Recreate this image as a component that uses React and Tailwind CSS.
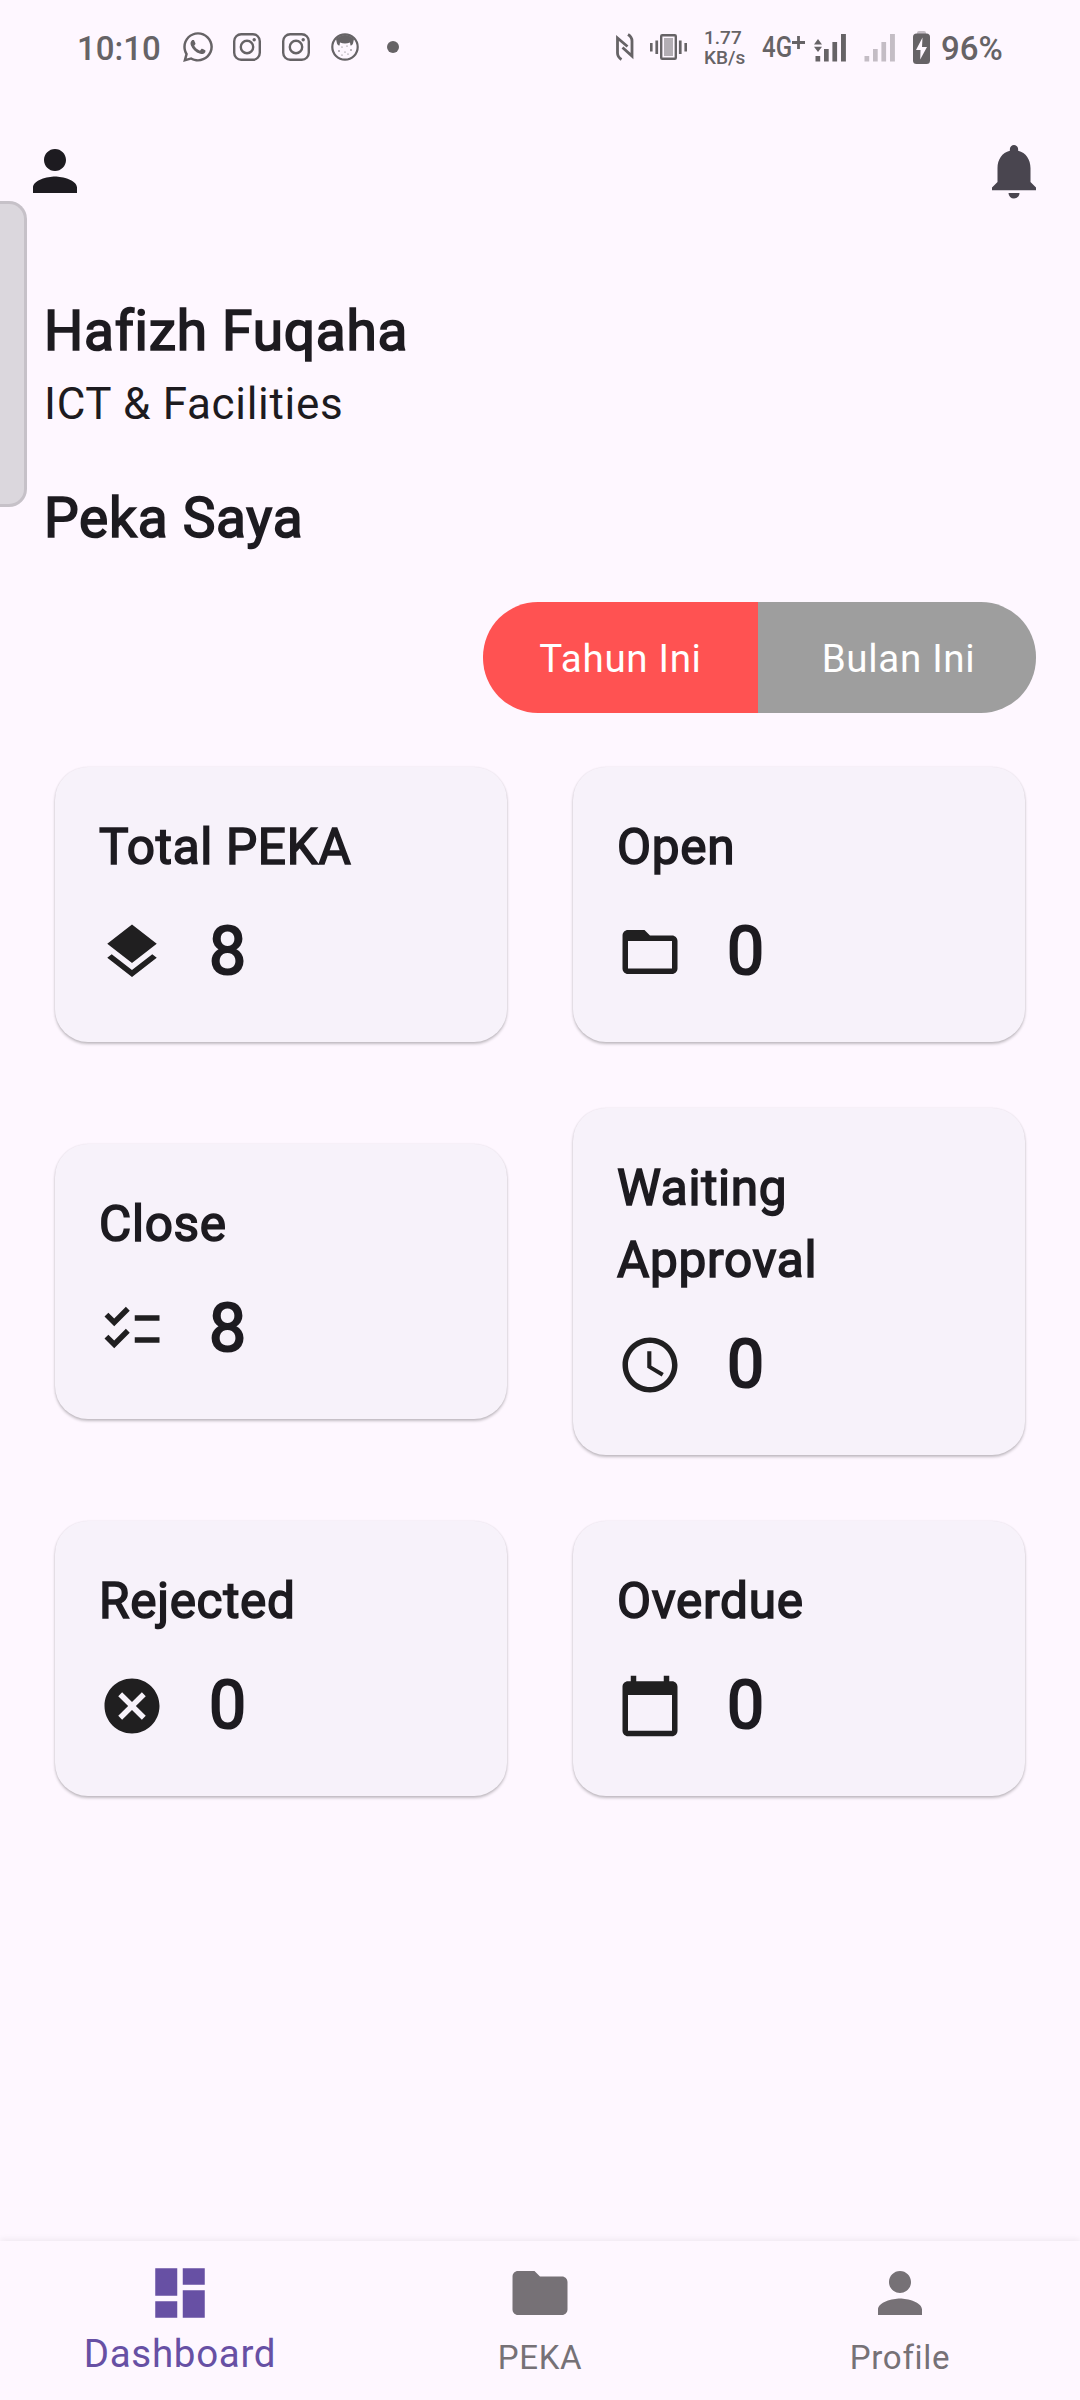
import {
  MdPerson, MdNotifications, MdLayers, MdFolderOpen, MdChecklist,
  MdAccessTime, MdCancel, MdCalendarToday, MdDashboard, MdFolder,
} from "react-icons/md";
import { FaWhatsapp } from "react-icons/fa";

function InstagramIcon({ className }) {
  return (
    <svg viewBox="0 0 28 28" className={className} fill="none" stroke="currentColor" strokeWidth="2.4">
      <rect x="1.2" y="1.2" width="25.6" height="25.6" rx="7" />
      <circle cx="14" cy="14" r="6.2" />
      <circle cx="21.2" cy="6.8" r="1.7" fill="currentColor" stroke="none" />
    </svg>
  );
}

function FaceIcon({ className }) {
  return (
    <svg viewBox="0 0 28 28" className={className}>
      <circle cx="14" cy="14" r="12.7" fill="none" stroke="currentColor" strokeWidth="2.2" />
      <path d="M5 6 Q14 -2 23 6 L22 10.5 Q21 13 19.5 12.5 L19 9.5 Q14 11.500 9 9.5 L8.5 12.5 Q7 13 6 10.5 Z" fill="currentColor" />
      <g fill="currentColor">
        <circle cx="8" cy="18" r=".8" /><circle cx="11" cy="14" r=".6" /><circle cx="16" cy="13" r=".6" />
        <circle cx="20" cy="17" r=".8" /><circle cx="14" cy="19" r=".6" /><circle cx="17" cy="21" r=".6" /><circle cx="11" cy="22" r=".6" />
      </g>
    </svg>
  );
}

function SignalBars({ className, arrows }) {
  return (
    <svg viewBox="0 0 32 30" className={className} fill="currentColor">
      <rect x="1.5" y="24" width="4.7" height="5.5" />
      <rect x="10" y="17" width="4.7" height="12.5" />
      <rect x="18.4" y="10" width="4.7" height="19.5" />
      <rect x="27" y="2" width="4.9" height="27.5" />
      {arrows && <path d="M4 7 8 12.5H0ZM4 20 0 14.700H8Z" />}
    </svg>
  );
}

function StatusBar() {
  return (
    <div className="flex h-[94px] items-center text-[#666366]">
      <div className="ml-[77px] w-[106px] pt-[3px] text-[33px] font-medium leading-none">10:10</div>
      <FaWhatsapp className="-ml-[2px] h-[34px] w-[34px]" />
      <InstagramIcon className="ml-[18px] h-[28px] w-[28px]" />
      <InstagramIcon className="ml-[21px] h-[28px] w-[28px]" />
      <FaceIcon className="ml-[21px] h-[28px] w-[28px]" />
      <div className="ml-[28px] h-[12px] w-[12px] rounded-full bg-current" />
      <svg viewBox="0 0 18 28" className="ml-[217px] h-[28px] w-[18px]" fill="none" stroke="currentColor" strokeWidth="2.8">
        <path d="M5.5 26.5 Q1.5 24 1.5 20 V5 L11.500 13.500" />
        <path d="M12 1.500 Q16 4 16 8 V23 L6.500 14.500" />
      </svg>
      <svg viewBox="0 0 37 26" className="ml-[16px] h-[26px] w-[37px]" fill="currentColor">
        <rect x="0" y="9" width="2.6" height="8.5" /><rect x="5.4" y="6.5" width="2.7" height="13.5" />
        <rect x="28.9" y="6.5" width="2.7" height="13.5" /><rect x="34.4" y="9" width="2.6" height="8.5" />
        <rect x="11.2" y="1.2" width="14.6" height="23.6" rx="1" fill="none" stroke="currentColor" strokeWidth="2.4" />
        <rect x="14" y="4" width="9" height="18" fill="#b3aeb4" />
      </svg>
      <div className="ml-[17px] w-[58px] pt-px text-[19px] font-medium leading-[20px]">
        <div>1.77</div>
        <div>KB/s</div>
      </div>
      <div className="w-[30px] text-[29px] font-medium leading-none"><span className="inline-block origin-left scale-x-[0.83]">4G</span></div>
      <svg viewBox="0 0 13 13" className="mb-[10px] h-[13px] w-[13px]" stroke="currentColor" strokeWidth="2.8"><path d="M6.500 0V13M0 6.500H13" /></svg>
      <SignalBars arrows className="ml-[9px] h-[30px] w-[32px]" />
      <SignalBars className="ml-[17px] h-[30px] w-[32px] text-[#c4bdc5]" />
      <svg viewBox="0 0 17 33" className="ml-[18px] h-[33px] w-[17px]">
        <rect x="4" y="0" width="9" height="5" rx="2" fill="#c4bdc5" />
        <rect x="0" y="2.5" width="17" height="30.5" rx="3.5" fill="currentColor" />
        <path d="M9.500 6.500 3 19H7.500L7.200 28.500 14 16H9Z" fill="#fef7ff" />
      </svg>
      <div className="ml-[11px] pt-[3px] text-[33px] font-medium leading-none">96%</div>
    </div>
  );
}

function StatCard({ title, icon: Icon, value }) {
  return (
    <div className="rounded-[33px] bg-[#f7f2fa] px-[44px] pt-[44px] shadow-[0_2px_3px_rgba(0,0,0,0.24),0_0_2px_rgba(0,0,0,0.08)]">
      <div className="w-[300px] text-[49.5px] leading-[72px] tracking-[0.69px] [-webkit-text-stroke:1.6px_#1d1b20]">{title}</div>
      <div className="mt-[22px] flex h-[137px] items-start gap-[44px]">
        <Icon className="mt-[14px] h-[66px] w-[66px] shrink-0 text-[#201f20]" />
        <div className="text-[66px] leading-[93px] [-webkit-text-stroke:2.1px_#1d1b20]">{value}</div>
      </div>
    </div>
  );
}

function NavItem({ icon: Icon, label, active }) {
  return (
    <div className={active ? "flex w-[360px] flex-col items-center text-[#6750a4]" : "flex w-[360px] flex-col items-center text-[#767176]"}>
      <Icon className="mt-[19px] h-[66px] w-[66px]" />
      <div className={active ? "mt-[6px] text-[38.5px] leading-[44px] tracking-[0.69px]" : "mt-[13px] text-[33px] leading-[38px] tracking-[0.69px]"}>{label}</div>
    </div>
  );
}

export default function App() {
  return (
    <div className="relative flex h-[2400px] w-[1080px] flex-col overflow-hidden bg-[#fef7ff] font-['Roboto',sans-serif] text-[#1d1b20]">
      <StatusBar />
      <div className="mt-[44px] flex justify-between pl-[22px] pr-[33px]">
        <MdPerson className="h-[66px] w-[66px]" />
        <MdNotifications className="h-[66px] w-[66px] text-[#49454f]" />
      </div>
      <div className="mt-[88px] px-[44px]">
        <div className="text-[55px] leading-[79px] tracking-[0.75px] [-webkit-text-stroke:1.7px_#1d1b20]">Hafizh Fuqaha</div>
        <div className="text-[44px] leading-[66px] tracking-[0.69px]">ICT &amp; Facilities</div>
        <div className="mt-[42px] text-[55px] leading-[79px] tracking-[0.75px] [-webkit-text-stroke:1.7px_#1d1b20]">Peka Saya</div>
        <div className="ml-auto mt-[44px] flex h-[111px] w-[553px] overflow-hidden rounded-[55px] text-[38.5px] tracking-[0.69px] text-white">
          <div className="flex w-[275px] items-center justify-center bg-[#ff5252] pt-[2px]">Tahun Ini</div>
          <div className="flex w-[278px] items-center justify-center bg-[#9e9e9e] pl-[3px] pt-[2px]">Bulan Ini</div>
        </div>
        <div className="mt-[54px] grid grid-cols-2 items-center gap-x-[66px] gap-y-[66px] px-[11px]">
          <StatCard title="Total PEKA" icon={MdLayers} value="8" />
          <StatCard title="Open" icon={MdFolderOpen} value="0" />
          <StatCard title="Close" icon={MdChecklist} value="8" />
          <StatCard title="Waiting Approval" icon={MdAccessTime} value="0" />
          <StatCard title="Rejected" icon={MdCancel} value="0" />
          <StatCard title="Overdue" icon={MdCalendarToday} value="0" />
        </div>
      </div>
      <div className="mt-auto flex h-[159px] bg-[#fef7ff] shadow-[0_-2px_6px_rgba(0,0,0,0.06)]">
        <NavItem icon={MdDashboard} label="Dashboard" active />
        <NavItem icon={MdFolder} label="PEKA" />
        <NavItem icon={MdPerson} label="Profile" />
      </div>
      <div className="absolute left-0 top-[201px] h-[306px] w-[27px] rounded-r-[18px] border-y-[3px] border-r-[3px] border-[#c6c1c8] bg-[#dbd7dd]" />
    </div>
  );
}
